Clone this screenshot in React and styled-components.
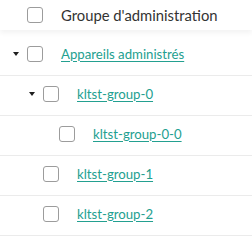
import React from 'react'
import styled, { createGlobalStyle } from 'styled-components'

const GlobalStyle = createGlobalStyle`
  body {
    margin: 0;
    background: #fff;
    font-family: Lato, 'Open Sans', sans-serif;
  }
`

const groups = [
  { name: 'Appareils administrés', level: 0, expanded: true },
  { name: 'kltst-group-0', level: 1, expanded: true },
  { name: 'kltst-group-0-0', level: 2 },
  { name: 'kltst-group-1', level: 1 },
  { name: 'kltst-group-2', level: 1 }
]

const Table = styled.div`
  width: 252px;
  height: 245px;
  overflow: hidden;
  background: #fff;
`

const Header = styled.div`
  display: flex;
  align-items: center;
  gap: 18px;
  height: 30px;
  padding-left: 27px;
  margin-bottom: 6px;
  box-shadow: 0 3px 5px rgba(0, 0, 0, 0.05);
  color: #333;
  font-size: 14.8px;
`

const Row = styled.div`
  display: flex;
  align-items: center;
  height: 40px;
  padding-left: ${p => 11 + p.$level * 16}px;
  padding-bottom: 4px;
  box-sizing: border-box;
  border-bottom: 1px solid #ebebeb;
`

const Toggle = styled.span`
  width: 16px;
  display: flex;
  padding-left: 2px;
  box-sizing: border-box;

  > i {
    width: 0;
    height: 0;
    border-left: 3.5px solid transparent;
    border-right: 3.5px solid transparent;
    border-top: 4px solid #1f1f1f;
  }
`

const Checkbox = styled.span`
  flex: none;
  width: 16px;
  height: 16px;
  box-sizing: border-box;
  border: 1px solid #9c9c9c;
  border-radius: 3px;
  background: #fff;
`

const Link = styled.a`
  margin-left: 18px;
  color: #23a090;
  font-size: 13.2px;
  text-decoration: underline;
  text-underline-offset: 2px;
  text-decoration-thickness: 1px;
  cursor: pointer;
`

const App = () => (
  <Table>
    <GlobalStyle />
    <Header>
      <Checkbox />
      <span>Groupe d'administration</span>
    </Header>
    {groups.map(g => (
      <Row key={g.name} $level={g.level}>
        <Toggle>{g.expanded && <i />}</Toggle>
        <Checkbox />
        <Link>{g.name}</Link>
      </Row>
    ))}
  </Table>
)

export default App
